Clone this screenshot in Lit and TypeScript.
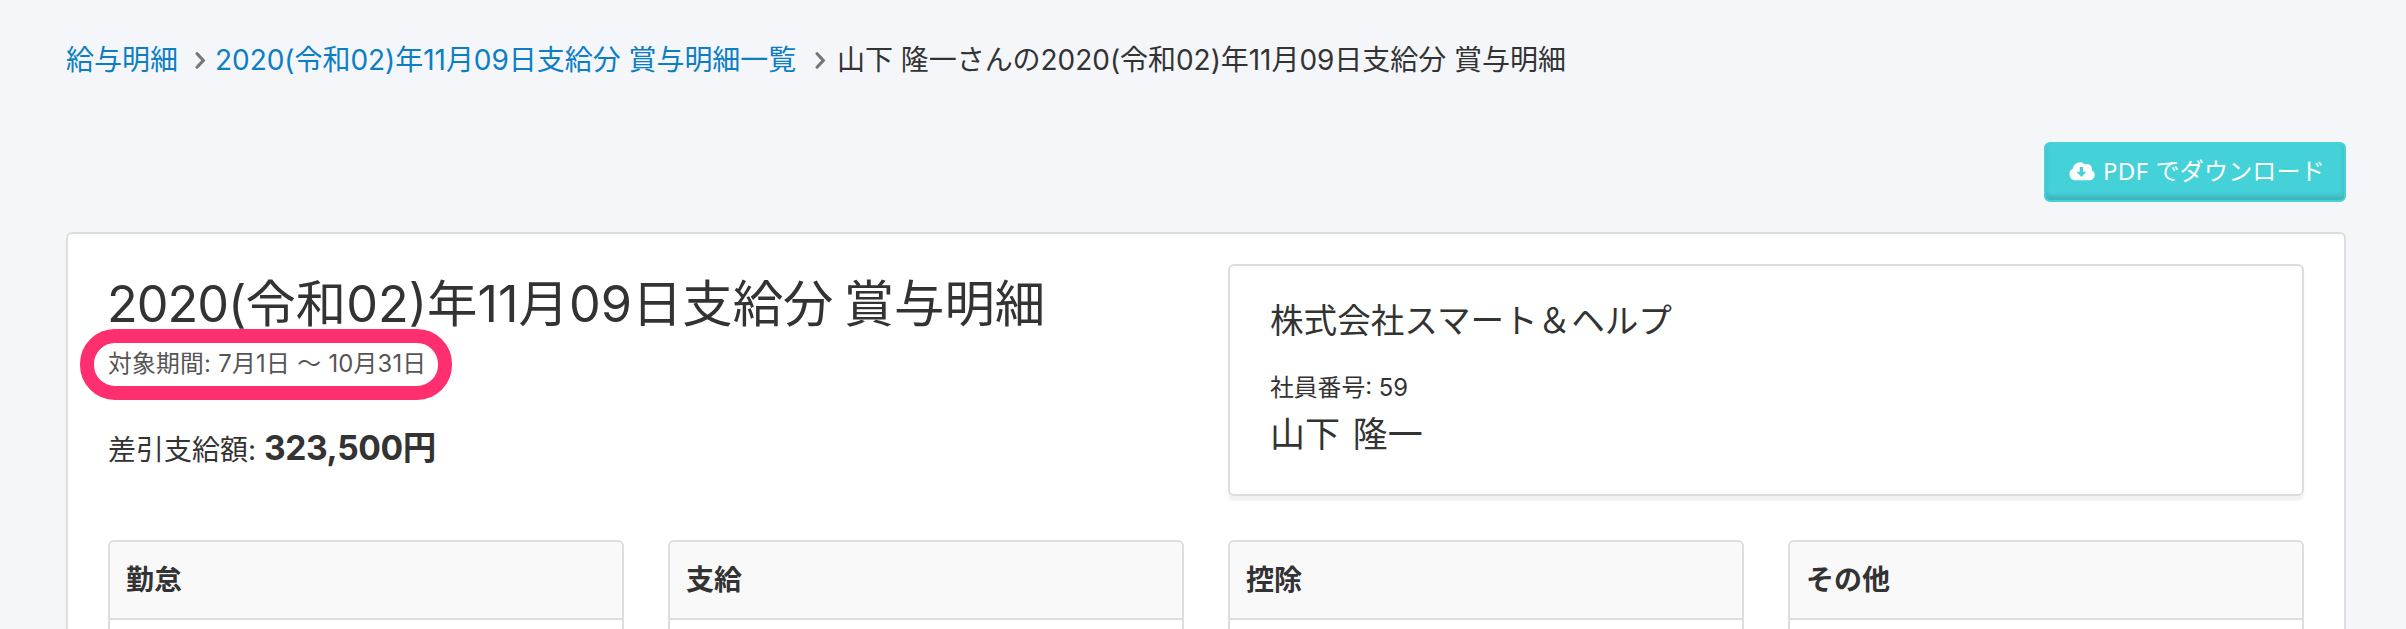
import { LitElement, html, css } from "lit";
import { customElement, property } from "lit/decorators.js";

@customElement("crumb-chevron")
class CrumbChevron extends LitElement {
  static styles = css`
    :host { display: block; width: 11px; height: 18px; }
    svg { display: block; }
  `;
  render() {
    return html`<svg width="11" height="18" viewBox="0 0 11 18" fill="none" stroke="#777" stroke-width="3" stroke-linecap="round">
      <path d="M2 2.6 L8.4 9.4 L2 16.2" /></svg>`;
  }
}

@customElement("detail-panel")
class DetailPanel extends LitElement {
  @property() heading = "";
  static styles = css`
    :host { display: block; height: 200px; box-sizing: border-box; border: 2px solid #ddd; border-radius: 6px; overflow: hidden; background: #fff; }
    .head { height: 76px; line-height: 76px; padding-left: 16px; background: #f9f9f9; border-bottom: 2px solid #ddd; font-weight: 700; font-size: 28px; }
  `;
  render() {
    return html`<div class="head">${this.heading}</div>`;
  }
}

@customElement("app-root")
class AppRoot extends LitElement {
  static styles = css`
    :host { display: block; box-sizing: border-box; height: 629px; overflow: hidden; padding: 40px 60px 0 66px; background: #f4f6fa; color: #333; font-family: Inter, "Noto Sans CJK JP", sans-serif; font-size: 28px; }
    .crumbs { display: flex; align-items: center; height: 40px; line-height: 40px; white-space: nowrap; letter-spacing: -0.04px; }
    .link { color: #0b7ec4; text-decoration: none; }
    .first { width: 129px; }
    .second { width: 600px; margin-left: 9px; }
    .current { margin-left: 11px; }
    .actions { display: flex; justify-content: flex-end; margin-top: 62px; }
    .button { display: flex; align-items: center; box-sizing: border-box; width: 302px; height: 60px; padding: 0 0 2px 23px; border: 2px solid #44d1d8; border-radius: 6px; background: #44d1d8; box-shadow: inset 0 -4px 4px rgba(50, 50, 50, 0.18); color: #fff; font: 24px/56px "Noto Sans", "Noto Sans CJK JP", sans-serif; letter-spacing: 0.2px; word-spacing: 1px; white-space: nowrap; }
    .cloud { flex: none; margin-right: 7px; }
    .card { box-sizing: border-box; height: 600px; margin-top: 30px; padding: 30px 40px; border: 2px solid #ddd; border-radius: 6px; background: #fff; }
    .summary { display: grid; grid-template-columns: 1076px 1076px; gap: 44px; }
    .title { margin: 7px 0 0 -1px; font-size: 50.4px; line-height: 66px; font-weight: 400; white-space: nowrap; word-spacing: -4px; }
    .year { letter-spacing: -1px; }
    .period { position: relative; width: 316px; height: 40px; margin-top: 7px; font-size: 23.8px; line-height: 40px; letter-spacing: 0.2px; word-spacing: 0.4px; color: #555; white-space: nowrap; }
    .ring { position: absolute; left: -28px; top: -15px; width: 372px; height: 71px; box-sizing: border-box; border: 14px solid #ff2e6e; border-radius: 35px; }
    .net { margin-top: 44px; line-height: 40px; white-space: nowrap; }
    .amount { font-size: 33.6px; font-weight: 700; letter-spacing: -0.4px; }
    .info { box-sizing: border-box; height: 232px; padding: 33px 40px 0; border: 2px solid #ddd; border-radius: 6px; box-shadow: 0 5px 2px rgba(0, 0, 0, 0.05); }
    .company { font-size: 33.6px; line-height: 44px; }
    .number { margin: 29px 0 8px; font-size: 23.8px; line-height: 32px; }
    .name { font-size: 35px; line-height: 44px; word-spacing: 3px; }
    .panels { display: grid; grid-template-columns: repeat(4, 1fr); gap: 44px; margin-top: 44px; }
  `;
  render() {
    return html`
      <nav class="crumbs">
        <a class="link first">給与明細</a>
        <crumb-chevron></crumb-chevron>
        <a class="link second">2020(令和02)年11月09日支給分 賞与明細一覧</a>
        <crumb-chevron></crumb-chevron>
        <span class="current">山下 隆一さんの2020(令和02)年11月09日支給分 賞与明細</span>
      </nav>
      <div class="actions">
        <div class="button">
          <svg class="cloud" width="27" height="20" viewBox="0 0 27 20">
            <path fill="#fff" d="M6 19.2a6 6 0 0 1-2.1-11.4A7 7 0 0 1 16 3.6a4.8 4.8 0 0 1 6.8 5.6A5.3 5.3 0 0 1 21 19.2Z" />
            <path fill="#44d1d8" d="M10.8 6h3.2v4.8h3.4l-5 5.2-5-5.2h3.4Z" />
          </svg>
          <span>PDF でダウンロード</span>
        </div>
      </div>
      <main class="card">
        <section class="summary">
          <div>
            <h1 class="title"><span class="year">2020(</span>令和02)年11月09日支給分 賞与明細</h1>
            <div class="period">対象期間: 7月1日 〜 10月31日<div class="ring"></div></div>
            <div class="net">差引支給額: <span class="amount">323,500円</span></div>
          </div>
          <div class="info">
            <div class="company">株式会社スマート＆ヘルプ</div>
            <div class="number">社員番号: 59</div>
            <div class="name">山下 隆一</div>
          </div>
        </section>
        <section class="panels">
          ${["勤怠", "支給", "控除", "その他"].map((h) => html`<detail-panel .heading=${h}></detail-panel>`)}
        </section>
      </main>
    `;
  }
}
